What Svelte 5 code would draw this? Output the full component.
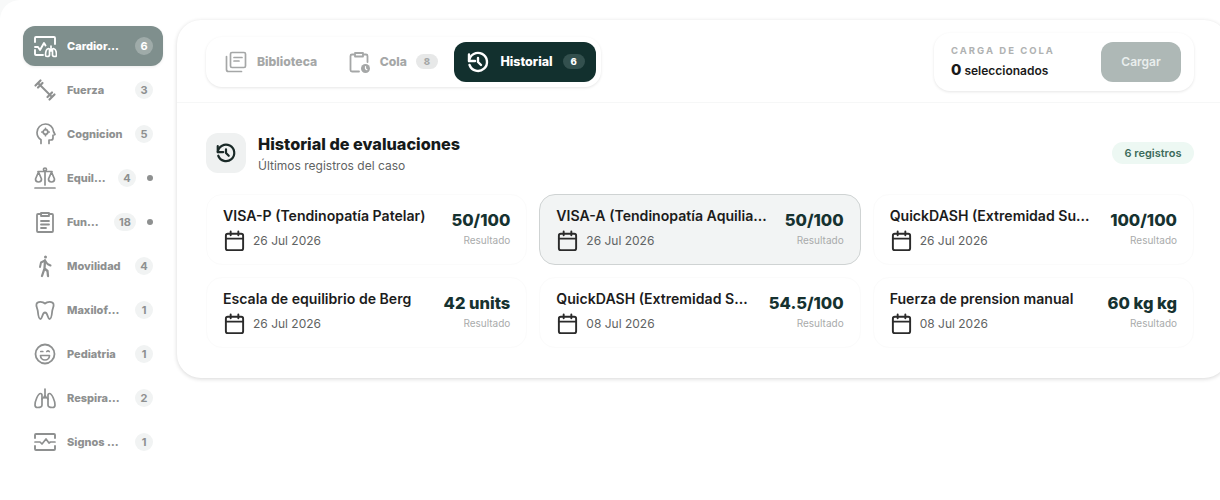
<script lang="ts">
  type NavItem = { id: string; label: string; count: number; dot?: boolean; active?: boolean };
  type Rec = { name: string; date: string; value: string; selected?: boolean };

  const nav: NavItem[] = [
    { id: 'cardio', label: 'Cardiorespiratorio', count: 6, active: true },
    { id: 'fuerza', label: 'Fuerza', count: 3 },
    { id: 'cognicion', label: 'Cognicion', count: 5 },
    { id: 'equilibrio', label: 'Equilibrio', count: 4, dot: true },
    { id: 'funcional', label: 'Funcional', count: 18, dot: true },
    { id: 'movilidad', label: 'Movilidad', count: 4 },
    { id: 'maxilo', label: 'Maxilofacial', count: 1 },
    { id: 'pediatria', label: 'Pediatria', count: 1 },
    { id: 'respira', label: 'Respiracion', count: 2 },
    { id: 'signos', label: 'Signos vitales', count: 1 }
  ];

  const records: Rec[] = [
    { name: 'VISA-P (Tendinopatía Patelar)', date: '26 Jul 2026', value: '50/100' },
    { name: 'VISA-A (Tendinopatía Aquiliana)', date: '26 Jul 2026', value: '50/100', selected: true },
    { name: 'QuickDASH (Extremidad Superior)', date: '26 Jul 2026', value: '100/100' },
    { name: 'Escala de equilibrio de Berg', date: '26 Jul 2026', value: '42 units' },
    { name: 'QuickDASH (Extremidad Superior)', date: '08 Jul 2026', value: '54.5/100' },
    { name: 'Fuerza de prension manual', date: '08 Jul 2026', value: '60 kg kg' }
  ];
</script>

{#snippet historyIcon(size: number)}
  <svg width={size} height={size} viewBox="0 0 24 24" fill="none" stroke="currentColor" stroke-width="2.4" stroke-linecap="round" stroke-linejoin="round">
    <path d="M12 8v4l3 3" />
    <path d="M3.05 11a9 9 0 1 1 .5 4" />
    <path d="M3 4.500v6.500h6" />
  </svg>
{/snippet}

{#snippet navIcon(id: string)}
  <svg width="24" height="24" viewBox="0 0 24 24" fill="none" stroke="currentColor" stroke-width="1.700" stroke-linecap="round" stroke-linejoin="round">
    {#if id === 'cardio'}
      <path d="M2 8V4a1 1 0 0 1 1-1h18a1 1 0 0 1 1 1v6M2 16v4a1 1 0 0 0 1 1h7" stroke-width="1.900" />
      <path d="M2 13h3l2 3 4-7 1.500 2.500" stroke-width="1.900" />
      <path d="M14 22.500c-1 0-1.500-.5-1.500-1.500 0-2.500 1-6 3-6.500.7 0 1 .5 1 1.200V21c0 1-.7 1.500-2.500 1.500zM22 22.500c1 0 1.500-.5 1.500-1.500 0-2.500-1-6-3-6.500-.7 0-1 .5-1 1.200V21c0 1 .7 1.500 2.500 1.500zM18 12v5" stroke-width="1.700" />
    {:else if id === 'fuerza'}
      <path d="M6 6l12 12" stroke-width="2" />
      <path d="M2.500 7.500 7.500 2.500M5 9.500 9.500 5M14.500 19 19 14.500M16.500 21.500 21.500 16.500" stroke-width="2.200" />
    {:else if id === 'cognicion'}
      <path d="M8 21.500v-3.800A8.500 8.500 0 0 1 4 10.500 8.500 8.500 0 0 1 12.500 2a8 8 0 0 1 8 7.500l1.500 3-2 .8V16a2 2 0 0 1-2 2h-2v3.500" />
      <circle cx="12.500" cy="10" r="2.300" />
      <path d="M12.500 6.300v1.200M12.500 12.500v1.200M8.800 10H10M15 10h1.200" />
    {:else if id === 'equilibrio'}
      <path d="M2 22h20M12 5v14M5 5.500h14" />
      <circle cx="12" cy="3.500" r="1.500" />
      <path d="M5.500 6 2.500 13a3 3 0 0 0 6 0zM18.500 6l-3 7a3 3 0 0 0 6 0z" />
    {:else if id === 'funcional'}
      <path d="M8 4H5a1 1 0 0 0-1 1v16a1 1 0 0 0 1 1h14a1 1 0 0 0 1-1V5a1 1 0 0 0-1-1h-3" stroke-width="1.800" />
      <path d="M8 3h8v3H8zM8 11h8M8 14.500h8M8 18h5" stroke-width="1.800" />
    {:else if id === 'movilidad'}
      <circle cx="12.500" cy="3" r="1.500" fill="currentColor" stroke="none" />
      <path d="M7 13l1-4.500 4-2 2.500 3.500 3 1.500" stroke-width="2" />
      <path d="M12 6.500l-.5 8-2.500 7.500M11.500 14.500l3 2.500.5 5" stroke-width="2.300" />
    {:else if id === 'maxilo'}
      <path d="M12 5.500C10 3.500 4.500 2.800 3.500 6c-.7 2.500 1 4.500 1.300 7 .3 3 .6 8 2.700 8 2 0 1.500-6.500 4.500-6.500s2.500 6.500 4.500 6.500c2.100 0 2.400-5 2.700-8 .3-2.500 2-4.500 1.300-7-1-3.200-6.500-2.500-8.500-.5z" stroke-width="1.800" />
    {:else if id === 'pediatria'}
      <circle cx="12" cy="12" r="9.500" stroke-width="1.800" />
      <path d="M7.800 9.500h2M16.200 9.500c-.7-.8-1.600-.8-2.400 0" />
      <path d="M7.500 13.500h9a4.500 4.500 0 0 1-9 0z" />
    {:else if id === 'respira'}
      <path d="M12 3v9M12 9c0 2-1.500 3-3 4M12 9c0 2 1.500 3 3 4" />
      <path d="M7.500 7.500C5 7.500 2 15 2 19c0 1.500 1 2.500 2.500 2.500 2 0 4.500-.5 4.500-2.500V9.500C9 8.500 8.500 7.500 7.500 7.500zM16.500 7.500C19 7.500 22 15 22 19c0 1.500-1 2.500-2.500 2.500-2 0-4.500-.5-4.500-2.500V9.500c0-1 .5-2 1.500-2z" />
    {:else}
      <path d="M2 8V5a1 1 0 0 1 1-1h18a1 1 0 0 1 1 1v3M2 16v3a1 1 0 0 0 1 1h18a1 1 0 0 0 1-1v-3" stroke-width="1.900" />
      <path d="M2 12h5l2 2 4-5 3 4 1.500-1H22" />
    {/if}
  </svg>
{/snippet}

<div class="page">
  <nav class="sidebar">
    {#each nav as item}
      <div class="nav-item" class:active={item.active}>
        <span class="nav-icon">{@render navIcon(item.id)}</span>
        <span class="nav-label">{item.label}</span>
        <span class="nav-count">{item.count}</span>
        {#if item.dot}<span class="nav-dot"></span>{/if}
      </div>
    {/each}
  </nav>

  <main class="card">
    <header class="toolbar">
      <div class="tabs">
        <button class="tab">
          <svg width="24" height="24" viewBox="0 0 24 24" fill="none" stroke="currentColor" stroke-width="1.700" stroke-linecap="round" stroke-linejoin="round">
            <rect x="6.500" y="2.500" width="15" height="15" rx="1.500" />
            <path d="M10 7.500h8M10 11h5M2.500 6.500v13a2 2 0 0 0 2 2h13" />
          </svg>
          Biblioteca
        </button>
        <button class="tab">
          <svg width="24" height="24" viewBox="0 0 24 24" fill="none" stroke="currentColor" stroke-width="1.800" stroke-linecap="round" stroke-linejoin="round">
            <path d="M7 4.500H5a1.500 1.500 0 0 0-1.500 1.500v14A1.500 1.500 0 0 0 5 21.500h7M17 4.500h2A1.500 1.500 0 0 1 20.500 6v6" />
            <path d="M8 3h8v3.500H8z" />
            <circle cx="18.500" cy="18.500" r="4.500" fill="currentColor" stroke="none" />
            <path d="M18.500 16.500v2.200l1.400 1" stroke="#fff" stroke-width="1.200" />
          </svg>
          Cola
          <span class="tab-count">8</span>
        </button>
        <button class="tab current">
          {@render historyIcon(24)}
          Historial
          <span class="tab-count">6</span>
        </button>
      </div>

      <div class="load-box">
        <div class="load-text">
          <span class="load-title">CARGA DE COLA</span>
          <span class="load-sel"><b>0</b> seleccionados</span>
        </div>
        <button class="load-btn">Cargar</button>
      </div>
    </header>

    <section class="history">
      <div class="history-head">
        <div class="head-icon">{@render historyIcon(22)}</div>
        <div class="head-text">
          <h2>Historial de evaluaciones</h2>
          <p>Últimos registros del caso</p>
        </div>
        <span class="head-badge">6 registros</span>
      </div>

      <div class="grid">
        {#each records as rec}
          <article class="rec" class:selected={rec.selected}>
            <div class="rec-left">
              <div class="rec-name">{rec.name}</div>
              <div class="rec-date">
                <svg width="23" height="23" viewBox="0 0 24 24" fill="none" stroke="#2b2b2b" stroke-width="2" stroke-linecap="round" stroke-linejoin="round">
                  <rect x="3" y="5" width="18" height="17" rx="2" />
                  <path d="M8 2.500v4M16 2.500v4M3 10h18" />
                </svg>
                {rec.date}
              </div>
            </div>
            <div class="rec-right">
              <div class="rec-value">{rec.value}</div>
              <div class="rec-caption">Resultado</div>
            </div>
          </article>
        {/each}
      </div>
    </section>
  </main>
</div>

<style>
  :global(body) {
    margin: 0;
    background: #f8f9f9;
    font-family: Inter, "Liberation Sans", sans-serif;
  }

  .page {
    display: flex;
    align-items: flex-start;
    height: 500px;
    overflow: hidden;
    box-sizing: border-box;
    padding: 20px 0 0 23px;
    border-radius: 20px 0 0 0;
    background: #fff;
    color: #1a1a1a;
  }

  .sidebar {
    display: flex;
    flex-direction: column;
    gap: 4px;
    width: 140px;
    flex: none;
    margin-top: 6px;
  }

  .nav-item {
    display: flex;
    align-items: center;
    height: 40px;
    padding: 0 10px;
    border-radius: 12px;
    color: #8e9090;
    box-sizing: border-box;
  }

  .nav-item.active {
    background: #7f8f8d;
    color: #fff;
    box-shadow: 0 1px 3px rgba(0, 0, 0, 0.08);
  }

  .nav-icon {
    display: flex;
    flex: none;
    width: 24px;
    margin-right: 10px;
  }

  .nav-label {
    flex: 1;
    min-width: 0;
    font-size: 11px;
    font-weight: 800;
    white-space: nowrap;
    overflow: hidden;
    text-overflow: ellipsis;
  }

  .nav-count {
    flex: none;
    min-width: 18px;
    height: 18px;
    line-height: 18px;
    padding: 0 5px;
    margin-left: 10px;
    text-align: center;
    font-size: 11px;
    font-weight: 700;
    border-radius: 9px;
    background: #f1f3f3;
    box-sizing: border-box;
  }

  .nav-item.active .nav-count {
    background: rgba(255, 255, 255, 0.25);
  }

  .nav-dot {
    flex: none;
    width: 6px;
    height: 6px;
    margin-left: 11px;
    border-radius: 50%;
    background: #8e9090;
  }

  .card {
    flex: none;
    width: 1051px;
    height: 358px;
    margin-left: 14px;
    background: #fff;
    border-radius: 24px;
    box-shadow: 0 1px 4px rgba(0, 0, 0, 0.16);
    box-sizing: border-box;
  }

  .toolbar {
    display: flex;
    align-items: center;
    justify-content: space-between;
    height: 83px;
    padding: 1px 34px 0 29px;
    border-bottom: 1px solid #f6f7f7;
    box-sizing: border-box;
  }

  .tabs {
    display: flex;
    align-items: center;
    gap: 3.500px;
    height: 50px;
    padding: 0 5px;
    border-radius: 16px;
    box-shadow: 0 1px 3px rgba(0, 0, 0, 0.1);
    box-sizing: border-box;
  }

  .tab {
    display: flex;
    align-items: center;
    gap: 9px;
    height: 40px;
    padding: 0 13px;
    border: none;
    border-radius: 12px;
    background: none;
    color: #a5a7a7;
    font: 800 12.200px Inter, "Liberation Sans", sans-serif;
  }

  .tab.current {
    gap: 10px;
    padding: 0 11px 0 12px;
    background: #12302e;
    color: #fff;
    font-size: 12.500px;
  }

  .tab-count {
    width: 22px;
    height: 15px;
    line-height: 15px;
    font-size: 9.500px;
    border-radius: 8px;
    background: #e7e8e8;
    color: #a5a7a7;
    text-align: center;
  }

  .tab.current .tab-count {
    background: #33504e;
    color: #fff;
  }

  .load-box {
    display: flex;
    align-items: center;
    justify-content: space-between;
    width: 260px;
    height: 58px;
    padding: 0 13px 0 17px;
    border-radius: 16px;
    box-shadow: 0 1px 3px rgba(0, 0, 0, 0.1);
    box-sizing: border-box;
  }

  .load-text {
    display: flex;
    flex-direction: column;
    gap: 4px;
  }

  .load-title {
    font-size: 9.500px;
    font-weight: 700;
    letter-spacing: 2px;
    color: #b0b2b2;
  }

  .load-sel {
    font-size: 12px;
    font-weight: 600;
    color: #1a1a1a;
  }

  .load-sel b {
    font-size: 15px;
    font-weight: 800;
  }

  .load-btn {
    width: 80px;
    height: 40px;
    border: none;
    border-radius: 12px;
    background: #aeb8b6;
    color: #e9eeed;
    font: 600 12px Inter, "Liberation Sans", sans-serif;
  }

  .history {
    padding: 30px 34px 0 29px;
  }

  .history-head {
    display: flex;
    align-items: center;
    gap: 12px;
    height: 40px;
  }

  .head-icon {
    display: flex;
    align-items: center;
    justify-content: center;
    width: 40px;
    height: 40px;
    border-radius: 12px;
    background: #eff1f1;
    color: #1a2a28;
  }

  .head-text {
    flex: 1;
  }

  h2 {
    margin: 1px 0 4px;
    font-size: 16.250px;
    line-height: 20px;
    font-weight: 800;
    color: #161a1a;
  }

  p {
    margin: 0;
    font-size: 12px;
    line-height: 15px;
    color: #5f6363;
  }

  .head-badge {
    width: 82px;
    height: 22px;
    line-height: 22px;
    text-align: center;
    font-size: 11px;
    font-weight: 600;
    border-radius: 11px;
    background: #edf8f3;
    color: #3c6b5a;
  }

  .grid {
    display: grid;
    grid-template-columns: repeat(3, minmax(0, 1fr));
    gap: 12px;
    margin-top: 21px;
  }

  .rec {
    display: flex;
    align-items: center;
    justify-content: space-between;
    gap: 14px;
    height: 71px;
    padding: 0 16px;
    border: 1px solid #fbfbfb;
    border-radius: 16px;
    box-sizing: border-box;
  }

  .rec.selected {
    background: #f2f4f4;
    border-color: #cfd3d3;
  }

  .rec-left {
    flex: 1;
    min-width: 0;
  }

  .rec-name {
    font-size: 14.100px;
    font-weight: 600;
    line-height: 16px;
    color: #1c1c1c;
    white-space: nowrap;
    overflow: hidden;
    text-overflow: ellipsis;
  }

  .rec-date {
    display: flex;
    align-items: center;
    gap: 7px;
    margin-top: 5px;
    font-size: 12px;
    color: #5f6363;
  }

  .rec-right {
    flex: none;
    margin-bottom: 3px;
    text-align: right;
  }

  .rec-value {
    font-size: 16.500px;
    line-height: 20px;
    font-weight: 800;
    color: #163230;
  }

  .rec-caption {
    margin-top: 4px;
    font-size: 10px;
    color: #a9abab;
  }
</style>
